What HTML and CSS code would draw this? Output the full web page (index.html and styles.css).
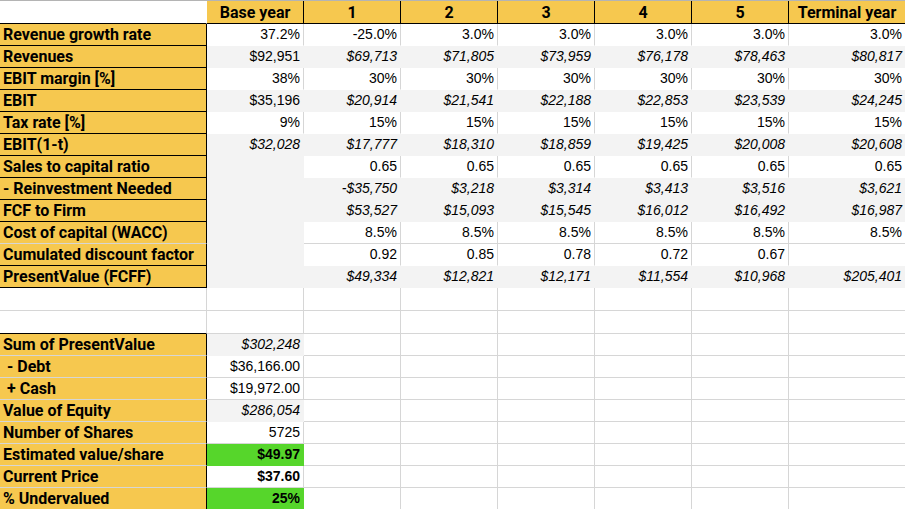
FILE: index.html
```html
<!DOCTYPE html>
<html>
<head>
<meta charset="utf-8">
<link rel="stylesheet" href="styles.css">
</head>
<body>
<div class="sheet">
<table class="grid">
  <colgroup>
    <col class="c-label"><col class="c-base"><col class="c-yr"><col class="c-yr"><col class="c-yr"><col class="c-yr"><col class="c-yr"><col class="c-term">
  </colgroup>
  <tr class="head">
    <th class="corner"></th><th>Base year</th><th>1</th><th>2</th><th>3</th><th>4</th><th>5</th><th>Terminal year</th>
  </tr>
  <tr class="w">
    <td class="lbl">Revenue growth rate</td><td>37.2%</td><td>-25.0%</td><td>3.0%</td><td>3.0%</td><td>3.0%</td><td>3.0%</td><td>3.0%</td>
  </tr>
  <tr class="g">
    <td class="lbl">Revenues</td><td>$92,951</td><td class="i">$69,713</td><td class="i">$71,805</td><td class="i">$73,959</td><td class="i">$76,178</td><td class="i">$78,463</td><td class="i">$80,817</td>
  </tr>
  <tr class="w">
    <td class="lbl">EBIT margin [%]</td><td>38%</td><td>30%</td><td>30%</td><td>30%</td><td>30%</td><td>30%</td><td>30%</td>
  </tr>
  <tr class="g">
    <td class="lbl">EBIT</td><td>$35,196</td><td class="i">$20,914</td><td class="i">$21,541</td><td class="i">$22,188</td><td class="i">$22,853</td><td class="i">$23,539</td><td class="i">$24,245</td>
  </tr>
  <tr class="w">
    <td class="lbl">Tax rate [%]</td><td>9%</td><td>15%</td><td>15%</td><td>15%</td><td>15%</td><td>15%</td><td>15%</td>
  </tr>
  <tr class="g">
    <td class="lbl">EBIT(1-t)</td><td class="i">$32,028</td><td class="i">$17,777</td><td class="i">$18,310</td><td class="i">$18,859</td><td class="i">$19,425</td><td class="i">$20,008</td><td class="i">$20,608</td>
  </tr>
  <tr class="w">
    <td class="lbl">Sales to capital ratio</td><td class="fill"></td><td>0.65</td><td>0.65</td><td>0.65</td><td>0.65</td><td>0.65</td><td>0.65</td>
  </tr>
  <tr class="g">
    <td class="lbl">- Reinvestment Needed</td><td></td><td class="i">-$35,750</td><td class="i">$3,218</td><td class="i">$3,314</td><td class="i">$3,413</td><td class="i">$3,516</td><td class="i">$3,621</td>
  </tr>
  <tr class="g">
    <td class="lbl">FCF to Firm</td><td></td><td class="i">$53,527</td><td class="i">$15,093</td><td class="i">$15,545</td><td class="i">$16,012</td><td class="i">$16,492</td><td class="i">$16,987</td>
  </tr>
  <tr class="w line">
    <td class="lbl">Cost of capital (WACC)</td><td class="fill"></td><td>8.5%</td><td>8.5%</td><td>8.5%</td><td>8.5%</td><td>8.5%</td><td>8.5%</td>
  </tr>
  <tr class="w">
    <td class="lbl">Cumulated discount factor</td><td class="fill"></td><td>0.92</td><td>0.85</td><td>0.78</td><td>0.72</td><td>0.67</td><td></td>
  </tr>
  <tr class="g">
    <td class="lbl last">PresentValue (FCFF)</td><td></td><td class="i">$49,334</td><td class="i">$12,821</td><td class="i">$12,171</td><td class="i">$11,554</td><td class="i">$10,968</td><td class="i">$205,401</td>
  </tr>
  <tr class="w line gap">
    <td class="blank"></td><td></td><td></td><td></td><td></td><td></td><td></td><td></td>
  </tr>
  <tr class="w line gap">
    <td class="blank pre"></td><td></td><td></td><td></td><td></td><td></td><td></td><td></td>
  </tr>
  <tr class="w line">
    <td class="lbl">Sum of PresentValue</td><td class="fill i">$302,248</td><td></td><td></td><td></td><td></td><td></td><td></td>
  </tr>
  <tr class="w line">
    <td class="lbl">&nbsp;- Debt</td><td>$36,166.00</td><td></td><td></td><td></td><td></td><td></td><td></td>
  </tr>
  <tr class="w line">
    <td class="lbl">&nbsp;+ Cash</td><td>$19,972.00</td><td></td><td></td><td></td><td></td><td></td><td></td>
  </tr>
  <tr class="w line">
    <td class="lbl">Value of Equity</td><td class="fill i">$286,054</td><td></td><td></td><td></td><td></td><td></td><td></td>
  </tr>
  <tr class="w line">
    <td class="lbl">Number of Shares</td><td>5725</td><td></td><td></td><td></td><td></td><td></td><td></td>
  </tr>
  <tr class="w line">
    <td class="lbl">Estimated value/share</td><td class="green b">$49.97</td><td></td><td></td><td></td><td></td><td></td><td></td>
  </tr>
  <tr class="w line">
    <td class="lbl">Current Price</td><td class="b">$37.60</td><td></td><td></td><td></td><td></td><td></td><td></td>
  </tr>
  <tr class="w line">
    <td class="lbl">% Undervalued</td><td class="green b">25%</td><td></td><td></td><td></td><td></td><td></td><td></td>
  </tr>
</table>
</div>
</body>
</html>
```
FILE: styles.css
```css
html, body {
  margin: 0;
  padding: 0;
  background: #ffffff;
}
.sheet {
  width: 905px;
  height: 509px;
  overflow: hidden;
  border-top: 1px solid #b4b4b4;
  box-sizing: border-box;
}
.grid {
  border-collapse: separate;
  border-spacing: 0;
  table-layout: fixed;
  width: 906px;
  font-family: "Liberation Sans", Arial, sans-serif;
  font-size: 14px;
  color: #000;
}
.c-label { width: 207px; }
.c-base { width: 97px; }
.c-yr { width: 97px; }
.c-term { width: 117px; }

.grid td, .grid th {
  height: 21px;
  padding: 0 3px 0 3px;
  line-height: 21px;
  box-sizing: content-box;
  white-space: nowrap;
  overflow: hidden;
  text-align: right;
  vertical-align: bottom;
  border-right: 1px solid #d6d6d6;
  border-bottom: 1px solid #d6d6d6;
}
.grid .gap td {
  height: 22px;
}

.head th {
  height: 21px;
  line-height: 21px;
  padding: 1px 0 0 0;
  background: #f6c84f;
  font-family: Roboto, "Liberation Sans", sans-serif;
  font-weight: 700;
  font-size: 16px;
  text-align: center;
  border-right: 1px solid #000;
  border-bottom: 1px solid #000;
}
.head th.corner {
  background: #fff;
  border-right: 1px solid #fff;
}

.grid td.lbl {
  background: #f6c84f;
  font-family: Roboto, "Liberation Sans", sans-serif;
  font-weight: 700;
  font-size: 16px;
  text-align: left;
  padding-left: 3px;
  border-right: 1px solid #000;
  border-bottom: 1px solid #000;
  white-space: pre;
}
.grid td.blank {
  background: #fff;
  border-right: 1px solid #d6d6d6;
  border-bottom: 1px solid #d6d6d6;
}
.grid td.blank.pre {
  border-bottom: 1px solid #000;
}

.g td {
  background: #f3f3f3;
  border-right-color: #f3f3f3;
  border-bottom-color: #f3f3f3;
}
.w td {
  border-bottom-color: #ffffff;
}
.w.line td {
  border-bottom-color: #d6d6d6;
}
.grid td.fill {
  background: #f3f3f3;
  border-right-color: #f3f3f3;
  border-bottom-color: #f3f3f3;
}
.grid td.green {
  background: #56d62b;
  border-right-color: #56d62b;
  border-bottom-color: #56d62b;
}
.i { font-style: italic; }
.b { font-weight: 700; }
```
